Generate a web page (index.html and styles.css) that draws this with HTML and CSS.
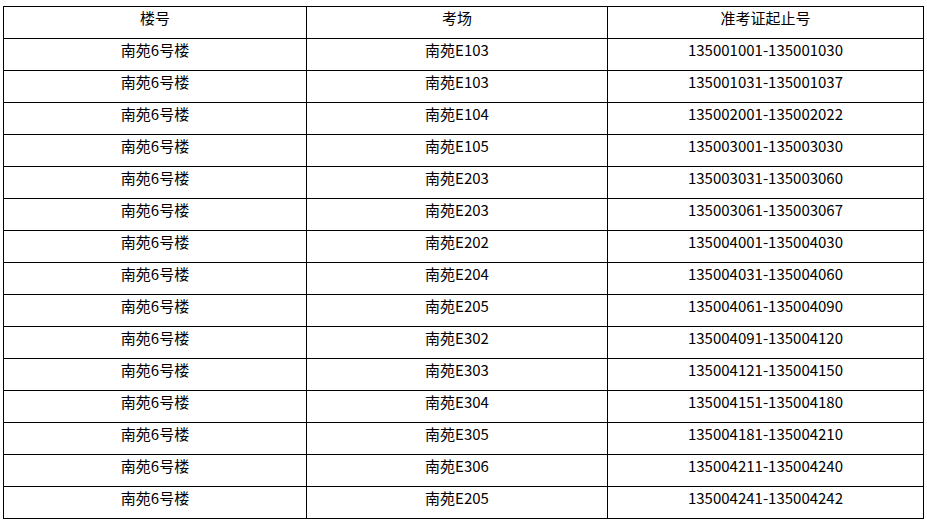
FILE: index.html
```html
<!DOCTYPE html>
<html lang="zh-CN">
<head>
<meta charset="utf-8">
<title>考场安排</title>
<link rel="stylesheet" href="styles.css">
</head>
<body>
<table class="exam-table">
  <colgroup>
    <col class="col-building">
    <col class="col-room">
    <col class="col-range">
  </colgroup>
  <thead>
    <tr><th>楼号</th><th>考场</th><th>准考证起止号</th></tr>
  </thead>
  <tbody>
    <tr><td>南苑6号楼</td><td>南苑E103</td><td>135001001-135001030</td></tr>
    <tr><td>南苑6号楼</td><td>南苑E103</td><td>135001031-135001037</td></tr>
    <tr><td>南苑6号楼</td><td>南苑E104</td><td>135002001-135002022</td></tr>
    <tr><td>南苑6号楼</td><td>南苑E105</td><td>135003001-135003030</td></tr>
    <tr><td>南苑6号楼</td><td>南苑E203</td><td>135003031-135003060</td></tr>
    <tr><td>南苑6号楼</td><td>南苑E203</td><td>135003061-135003067</td></tr>
    <tr><td>南苑6号楼</td><td>南苑E202</td><td>135004001-135004030</td></tr>
    <tr><td>南苑6号楼</td><td>南苑E204</td><td>135004031-135004060</td></tr>
    <tr><td>南苑6号楼</td><td>南苑E205</td><td>135004061-135004090</td></tr>
    <tr><td>南苑6号楼</td><td>南苑E302</td><td>135004091-135004120</td></tr>
    <tr><td>南苑6号楼</td><td>南苑E303</td><td>135004121-135004150</td></tr>
    <tr><td>南苑6号楼</td><td>南苑E304</td><td>135004151-135004180</td></tr>
    <tr><td>南苑6号楼</td><td>南苑E305</td><td>135004181-135004210</td></tr>
    <tr><td>南苑6号楼</td><td>南苑E306</td><td>135004211-135004240</td></tr>
    <tr><td>南苑6号楼</td><td>南苑E205</td><td>135004241-135004242</td></tr>
  </tbody>
</table>
</body>
</html>
```
FILE: styles.css
```css
html, body {
  margin: 0;
  padding: 0;
  background: #ffffff;
}
body {
  padding: 6px 0 0 3px;
  font-family: "Noto Sans CJK SC", "Noto Sans", sans-serif;
  font-size: 15px;
  color: #000000;
}
.exam-table {
  border-collapse: collapse;
  table-layout: fixed;
  width: 920px;
}
.col-building { width: 303px; }
.col-room { width: 301px; }
.col-range { width: 316px; }
.exam-table th,
.exam-table td {
  border: 1px solid #000000;
  height: 31px;
  box-sizing: border-box;
  padding: 1px 0 10px;
  line-height: 20px;
  text-align: center;
  vertical-align: top;
  font-weight: normal;
  white-space: nowrap;
}
```
